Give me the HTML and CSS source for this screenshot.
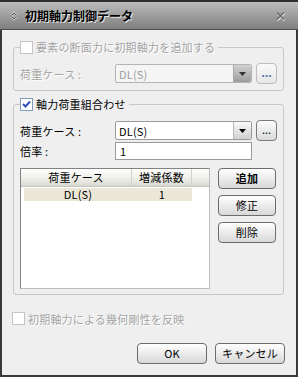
FILE: index.html
```html
<!DOCTYPE html>
<html lang="ja">
	<head>
		<title>初期軸力制御データ</title>
		<meta charset="utf-8">
		<link rel="stylesheet" href="styles.css">
	</head>

	<body>

	<div class="window">
		<div class="titlebar">
			<svg class="title-icon" width="8" height="10" viewBox="0 0 8 10">
				<path d="M1.5 4.5 L4 2 L6.5 4.5 M1.5 5.5 L4 8 L6.5 5.5" fill="none" stroke="#fff" stroke-width="2.2"/>
				<path d="M1.5 4.5 L4 2 L6.5 4.5 M1.5 5.5 L4 8 L6.5 5.5" fill="none" stroke="#555" stroke-width="1.1"/>
			</svg>
			<span class="title">初期軸力制御データ</span>
			<svg class="close" width="10" height="10" viewBox="0 0 10 10">
				<path d="M1.5 2.5 L8.5 9.5 M8.5 2.5 L1.5 9.5" stroke="#eee" stroke-width="1.6"/>
				<path d="M1 1.5 L8 8.5 M8 1.5 L1 8.5" stroke="#6a6a6a" stroke-width="1.6"/>
			</svg>
		</div>

		<div class="content">

			<!-- first group (disabled) -->
			<fieldset class="group group-off">
				<legend><span class="check check-off"></span>要素の断面力に初期軸力を追加する</legend>
				<div class="row">
					<span class="label">荷重ケース :</span>
					<div class="combo combo-off">
						<span class="combo-text">DL(S)</span>
						<span class="combo-btn">
							<svg width="7" height="4" viewBox="0 0 7 4"><polygon points="0,0 7,0 3.5,4" fill="#333"/></svg>
						</span>
					</div>
					<div class="dots dots-off">...</div>
				</div>
			</fieldset>

			<!-- second group -->
			<fieldset class="group group-two">
				<legend>
					<span class="check">
						<svg width="11" height="11" viewBox="0 0 11 11"><path d="M2 5 L4.5 7.5 L9 2.5" fill="none" stroke="#2f52c4" stroke-width="2"/></svg>
					</span>軸力荷重組合わせ
				</legend>
				<div class="row">
					<span class="label">荷重ケース :</span>
					<div class="combo">
						<span class="combo-text">DL(S)</span>
						<span class="combo-btn">
							<svg width="7" height="4" viewBox="0 0 7 4"><polygon points="0,0 7,0 3.5,4" fill="#000"/></svg>
						</span>
					</div>
					<div class="dots">...</div>
				</div>
				<div class="row row-input">
					<span class="label">倍率 :</span>
					<div class="textbox">1</div>
				</div>

				<div class="list-area">
					<div class="list">
						<div class="list-head">
							<span class="head-cell col-case">荷重ケース</span>
							<span class="head-cell col-factor">増減係数</span>
							<span class="head-cell col-fill"></span>
						</div>
						<div class="list-row">
							<span class="cell col-case-row">DL(S)</span>
							<span class="cell col-factor">1</span>
						</div>
					</div>
					<div class="side-buttons">
						<div class="btn btn-default">追加</div>
						<div class="btn">修正</div>
						<div class="btn">削除</div>
					</div>
				</div>
			</fieldset>

			<div class="check-row">
				<span class="check check-off"></span>初期軸力による幾何剛性を反映
			</div>

			<div class="footer">
				<div class="btn btn-wide">OK</div>
				<div class="btn btn-wide">キャンセル</div>
			</div>

		</div>
	</div>

	</body>
</html>
```

FILE: styles.css
```css
* {
	box-sizing: border-box;
}

body {
	margin: 0;
	font-family: "Noto Sans CJK JP", "Noto Sans", sans-serif;
	font-size: 11px;
	letter-spacing: 0.2px;
	color: #000;
}

.window {
	width: 298px;
	height: 377px;
	background-color: #efefef;
	border: 2px solid #3a3a3a;
	border-top: none;
	display: flex;
	flex-direction: column;
}

/* title bar */
.titlebar {
	height: 30px;
	border-top: 2px solid #2e2e2e;
	border-bottom: 1px solid #4c4c4c;
	background: linear-gradient(#bdbdbd, #7e7e7e);
	display: flex;
	align-items: center;
	padding: 0 10px 0 8px;
	margin: 0 -2px;
	padding-left: 10px;
}

.title-icon {
	margin-right: 7px;
}

.title {
	font-size: 12px;
	font-weight: bold;
	letter-spacing: 0;
	text-shadow: 1px 1px 0 #e6e6e6;
	flex: 1;
}

.close {
	margin-right: 2px;
}

.content {
	padding: 11px 12px 0 11px;
	flex: 1;
}

/* group boxes */
.group {
	margin: 0;
	padding: 9px 6px 6px 6px;
	border: 1px solid #c8c8c8;
	border-radius: 3px;
	min-width: 0;
}

.group legend {
	padding: 0 3px 0 0;
	height: 13px;
	line-height: 13px;
	display: flex;
	align-items: center;
}

.group-two {
	margin-top: 7px;
	padding-bottom: 5px;
}

.group-off legend,
.group-off .label,
.check-row {
	color: #a4a4a4;
	text-shadow: 1px 1px 0 #fff;
}

.check {
	width: 13px;
	height: 13px;
	background-color: #fff;
	border: 1px solid #7f9db9;
	margin-right: 3px;
	display: flex;
	align-items: center;
	justify-content: center;
}

.check-off {
	border-color: #c4c4c4;
}

.row {
	display: flex;
	align-items: center;
	height: 21px;
}

.row-input {
	height: 18px;
	margin-top: 1px;
}

.label {
	width: 95px;
}

/* combo box */
.combo {
	width: 137px;
	height: 19px;
	border: 1px solid #9a9a9a;
	border-radius: 2px;
	background-color: #fff;
	display: flex;
	align-items: center;
}

.combo-text {
	flex: 1;
	padding-left: 3px;
}

.combo-btn {
	width: 18px;
	height: 17px;
	background: linear-gradient(#fafafa, #cfcfcf);
	border-left: 1px solid #bcbcbc;
	border-radius: 0 2px 2px 0;
	display: flex;
	align-items: center;
	justify-content: center;
}

.combo-off {
	background-color: #f5f5f5;
	border-color: #b4b4b4;
}

.combo-off .combo-text {
	color: #9c9c9c;
}

.combo-off .combo-btn {
	background: linear-gradient(#d2d2d2, #9c9c9c);
	border-left-color: #a8a8a8;
}

.dots {
	width: 21px;
	height: 21px;
	margin-left: 4px;
	border: 1px solid #7a7a7a;
	border-radius: 4px;
	background: linear-gradient(#fdfdfd, #dadada);
	text-align: center;
	line-height: 16px;
	letter-spacing: 0;
}

.dots-off {
	border-color: #bdbdbd;
	color: #4f70b0;
	font-weight: bold;
	background: linear-gradient(#fafafa, #e6e6e6);
}

.textbox {
	width: 137px;
	height: 18px;
	border: 1px solid #9a9a9a;
	background-color: #fff;
	padding-left: 4px;
	line-height: 16px;
}

/* list */
.list-area {
	display: flex;
	margin-top: 8px;
}

.list {
	width: 190px;
	height: 121px;
	border: 1px solid #828282;
	border-right-color: #bdbdbd;
	border-bottom-color: #bdbdbd;
	background-color: #fff;
}

.list-head {
	display: flex;
	height: 18px;
	background: linear-gradient(#ffffff, #e9e9e3 70%, #d7d7d0);
	border-bottom: 1px solid #c6c6c0;
}

.head-cell {
	text-align: center;
	line-height: 17px;
	border-right: 1px solid #d2d2cc;
}

.col-case {
	width: 111px;
}

.col-factor {
	width: 60px;
	text-align: center;
}

.col-fill {
	flex: 1;
	border-right: none;
}

.list-row {
	display: flex;
	height: 13px;
	margin: 1px 0 0 3px;
	width: 168px;
	background-color: #ebe8d8;
	line-height: 13px;
}

.col-case-row {
	width: 108px;
	text-align: center;
}

.side-buttons {
	margin-left: 8px;
	display: flex;
	flex-direction: column;
	gap: 6px;
}

/* buttons */
.btn {
	width: 58px;
	height: 21px;
	border: 1px solid #6c6c6c;
	border-radius: 4px;
	background: linear-gradient(#ffffff, #d8d8d8);
	text-align: center;
	line-height: 18px;
}

.btn-default {
	font-weight: bold;
}

.btn-wide {
	width: 70px;
}

.check-row {
	display: flex;
	align-items: center;
	margin-top: 17px;
	margin-left: -1px;
	height: 13px;
}

.footer {
	display: flex;
	justify-content: flex-end;
	gap: 8px;
	margin-top: 18px;
	margin-right: -1px;
}
```
